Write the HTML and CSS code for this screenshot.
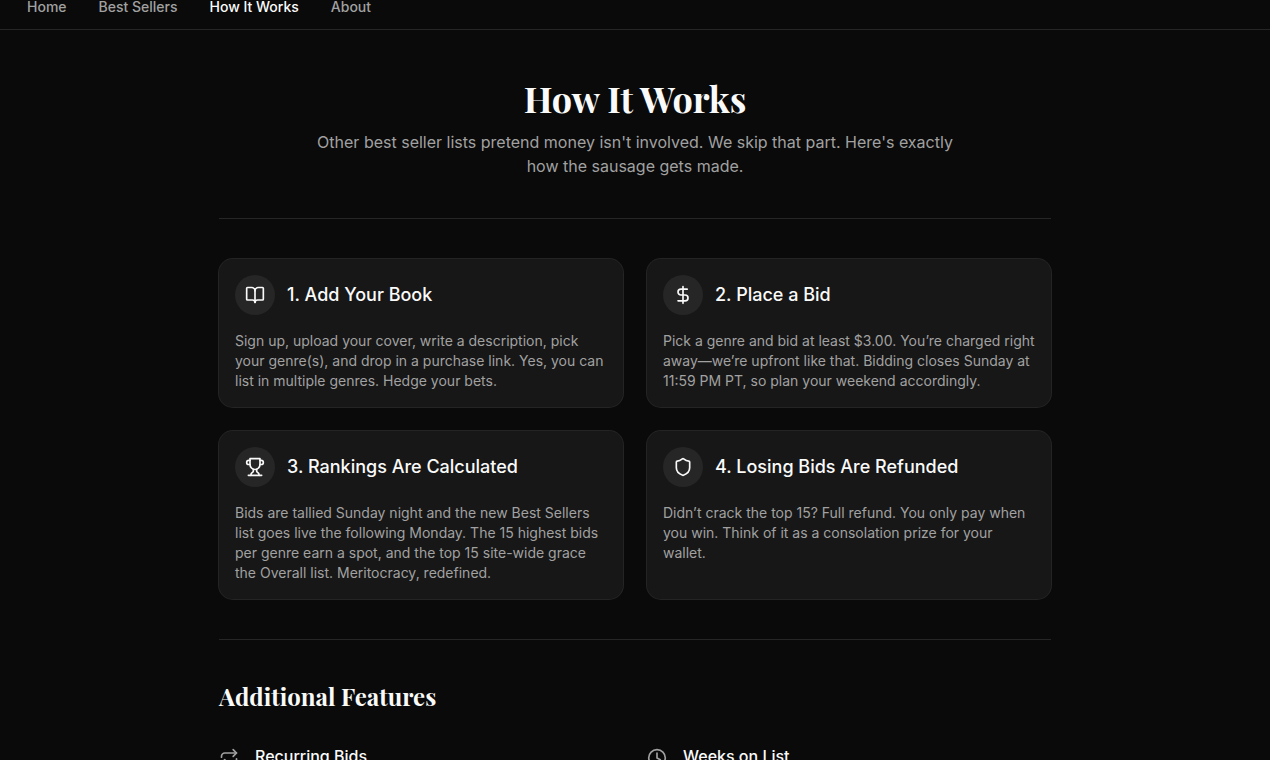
FILE: index.html
```html
<!DOCTYPE html>
<html lang="en">

<head>
  <meta charset="UTF-8" />
  <meta name="viewport" content="width=device-width, initial-scale=1.0" />
  <title>How It Works</title>
  <link rel="stylesheet" href="styles.css">
</head>

<body>
  <header class="site-header">
    <nav class="nav">
      <a href="#">Home</a>
      <a href="#">Best Sellers</a>
      <a href="#" class="active" aria-current="page">How It Works</a>
      <a href="#">About</a>
    </nav>
  </header>

  <main class="page">
    <section class="intro">
      <h1>How It Works</h1>
      <p>Other best seller lists pretend money isn't involved. We skip that part. Here's exactly how the sausage gets made.</p>
    </section>

    <hr class="divider" />

    <section class="steps">
      <article class="card">
        <div class="card-header">
          <span class="icon-circle">
            <svg class="icon" viewBox="0 0 24 24" aria-hidden="true">
              <path d="M12 7v14" />
              <path d="M3 18a1 1 0 0 1-1-1V4a1 1 0 0 1 1-1h5a4 4 0 0 1 4 4 4 4 0 0 1 4-4h5a1 1 0 0 1 1 1v13a1 1 0 0 1-1 1h-6a3 3 0 0 0-3 3 3 3 0 0 0-3-3z" />
            </svg>
          </span>
          <h3>1. Add Your Book</h3>
        </div>
        <p>Sign up, upload your cover, write a description, pick your genre(s), and drop in a purchase link. Yes, you can list in multiple genres. Hedge your bets.</p>
      </article>

      <article class="card">
        <div class="card-header">
          <span class="icon-circle">
            <svg class="icon" viewBox="0 0 24 24" aria-hidden="true">
              <path d="M12 2v20" />
              <path d="M17 5H9.5a3.5 3.5 0 0 0 0 7h5a3.5 3.5 0 0 1 0 7H6" />
            </svg>
          </span>
          <h3>2. Place a Bid</h3>
        </div>
        <p>Pick a genre and bid at least $3.00. You’re charged right away—we’re upfront like that. Bidding closes Sunday at 11:59 PM PT, so plan your weekend accordingly.</p>
      </article>

      <article class="card">
        <div class="card-header">
          <span class="icon-circle">
            <svg class="icon" viewBox="0 0 24 24" aria-hidden="true">
              <path d="M6 9H4.5a2.5 2.5 0 0 1 0-5H6" />
              <path d="M18 9h1.5a2.5 2.5 0 0 0 0-5H18" />
              <path d="M4 22h16" />
              <path d="M10 14.66V17c0 .55-.47.98-.97 1.21C7.85 18.75 7 20.24 7 22" />
              <path d="M14 14.66V17c0 .55.47.98.97 1.21C16.15 18.75 17 20.24 17 22" />
              <path d="M18 2H6v7a6 6 0 0 0 12 0V2Z" />
            </svg>
          </span>
          <h3>3. Rankings Are Calculated</h3>
        </div>
        <p>Bids are tallied Sunday night and the new Best Sellers list goes live the following Monday. The 15 highest bids per genre earn a spot, and the top 15 site-wide grace the Overall list. Meritocracy, redefined.</p>
      </article>

      <article class="card">
        <div class="card-header">
          <span class="icon-circle">
            <svg class="icon" viewBox="0 0 24 24" aria-hidden="true">
              <path d="M20 13c0 5-3.5 7.5-7.66 8.95a1 1 0 0 1-.67-.01C7.5 20.5 4 18 4 13V6a1 1 0 0 1 1-1c2 0 4.5-1.2 6.24-2.72a1.17 1.17 0 0 1 1.52 0C14.51 3.81 17 5 19 5a1 1 0 0 1 1 1z" />
            </svg>
          </span>
          <h3>4. Losing Bids Are Refunded</h3>
        </div>
        <p>Didn’t crack the top 15? Full refund. You only pay when you win. Think of it as a consolation prize for your wallet.</p>
      </article>
    </section>

    <hr class="divider" />

    <section class="features">
      <h2>Additional Features</h2>
      <div class="feature-grid">
        <div class="feature">
          <svg class="icon" viewBox="0 0 24 24" aria-hidden="true">
            <path d="m17 2 4 4-4 4" />
            <path d="M3 11v-1a4 4 0 0 1 4-4h14" />
            <path d="m7 22-4-4 4-4" />
            <path d="M21 13v1a4 4 0 0 1-4 4H3" />
          </svg>
          <h3>Recurring Bids</h3>
        </div>
        <div class="feature">
          <svg class="icon" viewBox="0 0 24 24" aria-hidden="true">
            <circle cx="12" cy="12" r="10" />
            <path d="M12 6v6l4 2" />
          </svg>
          <h3>Weeks on List</h3>
        </div>
      </div>
    </section>
  </main>
</body>

</html>
```
FILE: styles.css
```css
* {
  box-sizing: border-box;
}

html {
  scrollbar-width: none;
}

body {
  margin: 0;
  background-color: #0a0a0a;
  color: #fafafa;
  font-family: Inter, sans-serif;
}

h1,
h2,
h3,
p {
  margin: 0;
}

.site-header {
  padding: 0 27px 15px;
  border-bottom: 1px solid #262626;
}

.nav {
  display: flex;
  gap: 32px;
}

.nav a {
  color: #a1a1a1;
  font-size: 14px;
  font-weight: 500;
  line-height: 14px;
  text-decoration: none;
}

.nav a.active {
  color: #fafafa;
}

.page {
  max-width: 896px;
  margin: 0 auto;
  padding: 48px 32px;
}

.intro {
  text-align: center;
}

.intro h1 {
  margin-bottom: 12px;
  font-family: "Playfair Display", "Liberation Serif", serif;
  font-size: 36px;
  font-weight: 700;
  line-height: 40px;
}

.intro p {
  max-width: 672px;
  margin: 0 auto;
  color: #a1a1a1;
  font-size: 16px;
  line-height: 24px;
}

.divider {
  height: 1px;
  margin: 40px 0;
  border: none;
  background-color: #262626;
}

.steps {
  display: grid;
  grid-template-columns: 1fr 1fr;
  gap: 24px;
}

.card {
  padding: 16px;
  border-radius: 14px;
  background-color: #171717;
  box-shadow: 0 0 0 1px #242424;
}

.card-header {
  display: flex;
  align-items: center;
  gap: 12px;
  margin-bottom: 16px;
}

.card h3 {
  font-size: 18px;
  font-weight: 500;
  line-height: 28px;
}

.card p {
  color: #a1a1a1;
  font-size: 14px;
  line-height: 20px;
}

.icon-circle {
  display: flex;
  flex: none;
  align-items: center;
  justify-content: center;
  width: 40px;
  height: 40px;
  border-radius: 50%;
  background-color: #262626;
}

.icon {
  flex: none;
  width: 20px;
  height: 20px;
  fill: none;
  stroke: currentColor;
  stroke-width: 2;
  stroke-linecap: round;
  stroke-linejoin: round;
}

.features h2 {
  margin-bottom: 32px;
  font-family: "Playfair Display", "Liberation Serif", serif;
  font-size: 24px;
  font-weight: 700;
  line-height: 32px;
}

.feature-grid {
  display: grid;
  grid-template-columns: 1fr 1fr;
  gap: 24px;
}

.feature {
  display: flex;
  gap: 16px;
}

.feature .icon {
  margin-top: 4px;
  color: #a1a1a1;
}

.feature h3 {
  font-size: 16px;
  font-weight: 500;
  line-height: 24px;
}
```
